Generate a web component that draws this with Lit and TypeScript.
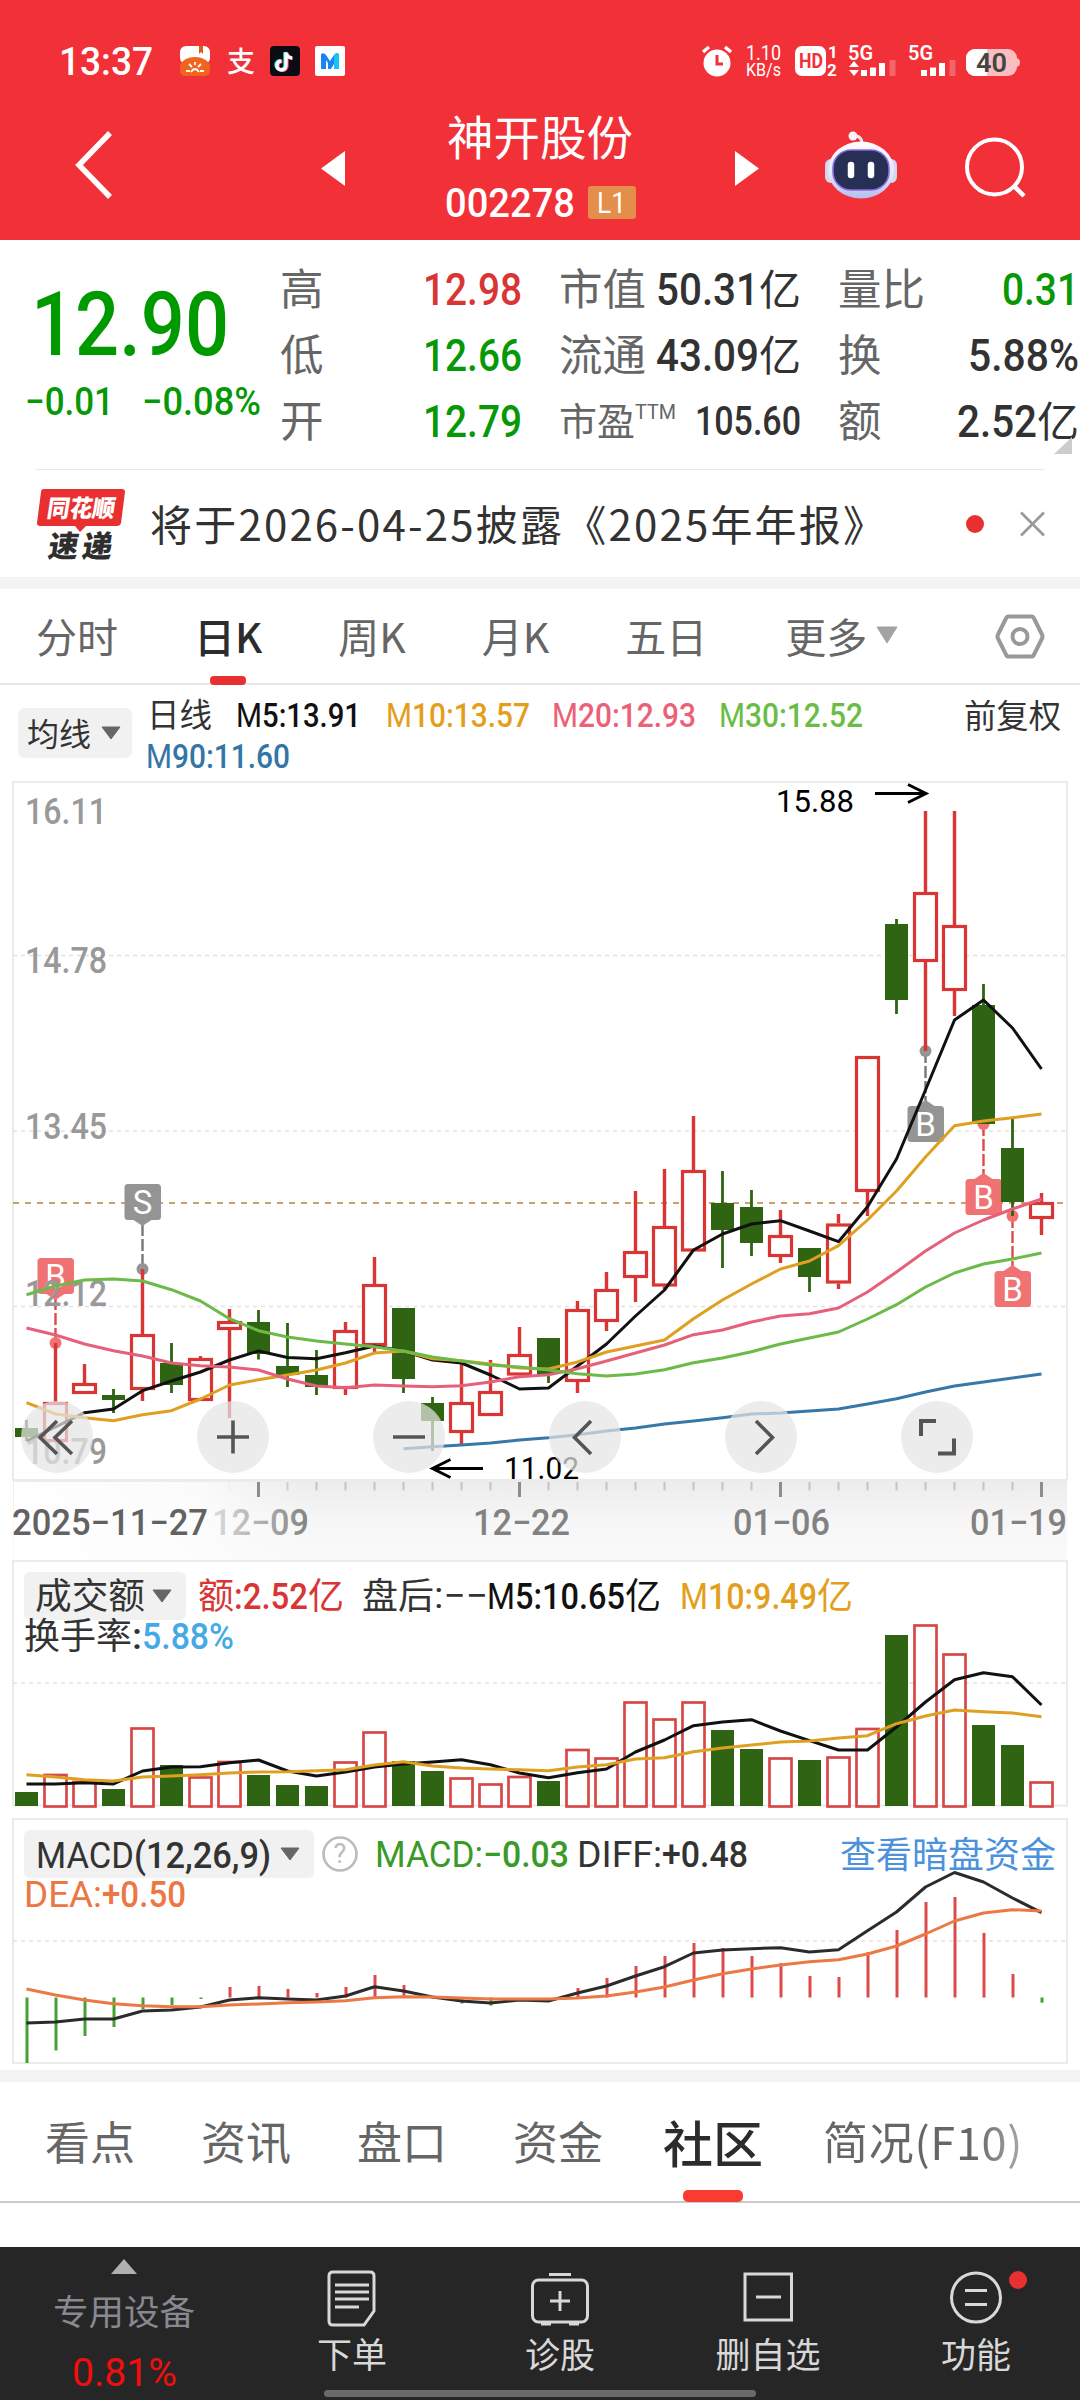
import { LitElement, html, svg, css } from "lit";
import { customElement } from "lit/decorators.js";

const RED = "#d93535";
const GREEN = "#2f6412";
const NUM = 'Roboto, "Noto Sans CJK SC", sans-serif';
const CJK = '"Noto Sans CJK SC", sans-serif';

const X0 = 26.5;
const STEP = 29;
const px = (i: number) => X0 + i * STEP;

// [rising, high, body top, body bottom, low] in chart units
const CANDLES: [number, number, number, number, number][] = [
  [0, 1420, 1428, 1437, 1441], [1, 1343, 1402, 1442, 1442], [1, 1364, 1383, 1394, 1394],
  [0, 1389, 1395, 1400, 1413], [1, 1269, 1334, 1390, 1401], [0, 1343, 1363, 1385, 1393],
  [1, 1356, 1358, 1401, 1401], [1, 1309, 1321, 1330, 1418], [0, 1310, 1322, 1354, 1359.5],
  [0, 1323, 1366, 1375, 1387], [0, 1350, 1375, 1387, 1395], [1, 1322, 1330, 1389, 1395],
  [1, 1257, 1284, 1346, 1352], [0, 1308, 1308, 1379, 1393], [0, 1397, 1403, 1421, 1451],
  [1, 1364, 1402, 1433, 1445], [1, 1360, 1391, 1416, 1416], [1, 1327, 1354, 1375.5, 1375.5],
  [0, 1338, 1338, 1374, 1383], [1, 1301, 1309, 1382, 1393], [1, 1272, 1289, 1322, 1331],
  [1, 1191, 1251, 1278, 1302], [1, 1169, 1226, 1286.5, 1289], [1, 1116, 1170, 1251.5, 1251.5],
  [0, 1171, 1203, 1230, 1268], [0, 1190, 1207, 1243, 1256], [1, 1210, 1235, 1257, 1263],
  [0, 1248, 1248, 1277, 1292], [1, 1214, 1223.5, 1283.5, 1289], [1, 1056, 1056, 1192, 1216],
  [0, 919, 924, 1000, 1014], [1, 811, 892, 962, 1051], [1, 811, 925, 991, 1016],
  [0, 984, 1005, 1124, 1124], [0, 1119, 1148, 1202, 1216], [1, 1193, 1202, 1219, 1235],
];
const M5 = [1441, 1427, 1412.7, 1409, 1390.7, 1381, 1372, 1360, 1351, 1357.5, 1358.7, 1352.7, 1346, 1351, 1360, 1363, 1375, 1389, 1388, 1366, 1344, 1316, 1290, 1250, 1234, 1224, 1220.7, 1231, 1241.7, 1206.7, 1159, 1090, 1020, 1000, 1028, 1069];
const M10 = [1402.7, 1414, 1417.7, 1420.7, 1414.7, 1410.7, 1399, 1385, 1379.7, 1375, 1370, 1363, 1353, 1351, 1358.7, 1360.7, 1364, 1368, 1369, 1362, 1352, 1346, 1340, 1318.7, 1300, 1284, 1269, 1261, 1245.7, 1220, 1191, 1157, 1125.7, 1121, 1117.7, 1114];
const M20 = [1328, 1335, 1344, 1350.7, 1356, 1363, 1365.7, 1367, 1370, 1379, 1386, 1387.7, 1385, 1386, 1386.7, 1385.7, 1382, 1376.7, 1374.7, 1368.7, 1361, 1353, 1345, 1334.7, 1330, 1322, 1316, 1313.7, 1308, 1292, 1272, 1251, 1233, 1220, 1209, 1199];
const M30 = [1294.7, 1286, 1280, 1279, 1281, 1289.7, 1301, 1318.7, 1330.7, 1337, 1341, 1344, 1346.7, 1351, 1357, 1361, 1365, 1367, 1370, 1373.7, 1376, 1374, 1369.7, 1362.7, 1358, 1351.7, 1344, 1338, 1332, 1319, 1304.7, 1287, 1273, 1264, 1259, 1253];
const M90 = [1448.7, 1446.7, 1445, 1443, 1440, 1437.7, 1434.7, 1431, 1428, 1424, 1421, 1417.7, 1414, 1413, 1411, 1409, 1404, 1398.7, 1392, 1386, 1382, 1378, 1374];

const VOLUME = [1792, 1774, 1781, 1789, 1727.5, 1765, 1776.5, 1761, 1775, 1785, 1786, 1761.5, 1731.5, 1761, 1771, 1777.5, 1783.5, 1776, 1781, 1749, 1757.5, 1701.5, 1718.5, 1701.5, 1730, 1749, 1757.5, 1760, 1756.5, 1728, 1635, 1624.5, 1653.5, 1725, 1745, 1781.5];
const V5 = [1784, 1784, 1782.7, 1784, 1771, 1767, 1766.7, 1762.7, 1760, 1771, 1776, 1772, 1767, 1764, 1762, 1759.7, 1764.7, 1773, 1777.7, 1772.7, 1769, 1752, 1740, 1725.7, 1722, 1719.7, 1731, 1740.7, 1750, 1750, 1727, 1702, 1679.7, 1672.7, 1676.7, 1705];
const V10 = [1774.7, 1777, 1779.7, 1781, 1777, 1776, 1774.7, 1773, 1772, 1771.7, 1770.7, 1769.7, 1765, 1761.7, 1766, 1768, 1769, 1769.7, 1770.7, 1767, 1764.7, 1759, 1757.7, 1751.7, 1748, 1745, 1742, 1741, 1738, 1735.7, 1723.7, 1716, 1710, 1711.7, 1713, 1716.7];

const ZERO = 1997.5;
const HIST = [2063, 2050.5, 2036, 2027, 2009, 2005, 1999, 1987, 1986, 1989, 1993, 1987, 1975, 1985, 1997.5, 2003.5, 2005.5, 1997.5, 1997.5, 1988, 1978, 1966, 1956, 1943, 1948, 1956, 1963, 1976, 1977, 1952, 1930, 1902, 1897, 1933, 1974, 2002.7];
const DIFF = [2023, 2022, 2019, 2019, 2011, 2010, 2007, 2000, 1997.7, 1999, 2000, 1996, 1986.7, 1991, 1997, 2001, 2003, 2000, 2001, 1993, 1986, 1976, 1966.7, 1953, 1950, 1948.7, 1947.7, 1952, 1949.7, 1930.7, 1912, 1887, 1872.5, 1882, 1898, 1912.7];
const DEA = [1989, 1995, 2000, 2003.7, 2005.7, 2006.7, 2006.7, 2005, 2004, 2002.7, 2002, 2000.7, 1997.7, 1996.7, 1997, 1998, 1999, 1999, 1999, 1998, 1996, 1992, 1987, 1980, 1973.7, 1969, 1965, 1961.7, 1959.7, 1954, 1946, 1934, 1921, 1913, 1909.7, 1911];

/** Text squeezed to an exact width, boxed to its cap height. */
const fit = (text: string, w: number, size: number, color: string, weight = 500) => html`
  <svg class="fit" width=${w} height=${Math.round(size * 0.71)}>
    <text x="0" y=${Math.round(size * 0.71)} font-family=${NUM} font-size=${size} font-weight=${weight}
      fill=${color} textLength=${w} lengthAdjust="spacingAndGlyphs">${text}</text>
  </svg>`;

/** Same, placed inside a chart. */
const label = (x: number, y: number, text: string, w: number, size: number, color: string, weight = 500, family = NUM) => svg`
  <text x=${x} y=${y} font-family=${family} font-size=${size} font-weight=${weight} fill=${color}
    textLength=${w} lengthAdjust="spacingAndGlyphs">${text}</text>`;

const line = (ys: number[], color: string, start = 0, w = 3) => svg`
  <polyline fill="none" stroke=${color} stroke-width=${w} stroke-linejoin="round"
    points=${ys.map((y, i) => `${px(i + start)},${y}`).join(" ")} />`;

const dash = (y: number) => svg`
  <line x1="13" x2="1066" y1=${y} y2=${y} stroke="#e2e2e2" stroke-width="1.6" stroke-dasharray="4 4" />`;

const marker = (i: number, letter: string, dotY: number, top: number, down: boolean, fill: string, stem: string) => {
  const x = px(i);
  return svg`
    <line x1=${x} x2=${x} y1=${down ? top + 40 : dotY} y2=${down ? dotY : top - 5} stroke=${stem} stroke-width="2.4" stroke-dasharray="12 3" />
    <circle cx=${x} cy=${dotY} r="6" fill=${fill} />
    <path d=${down ? `M${x - 9} ${top + 36}h18l-9 6z` : `M${x - 9} ${top}h18l-9 -6z`} fill=${fill} />
    <rect x=${x - 18} y=${top} width="36.5" height="36" rx="3.5" fill=${fill} />
    <text x=${x} y=${top + 30} text-anchor="middle" font-family=${NUM} font-size="33" fill="#fff">${letter}</text>`;
};

const caret = (x: number, y: number, color = "#666") => svg`<path d="M${x} ${y}h18l-9 12z" fill=${color} stroke=${color} stroke-width="1" stroke-linejoin="round" />`;

@customElement("top-bar")
class TopBar extends LitElement {
  static styles = css`
    :host { display: block; height: 240px; background: #f23038; color: #fff; }
    .status { display: flex; align-items: center; justify-content: space-between; padding: 41px 60px 0 59px; height: 40px; }
    .nav { display: flex; align-items: center; height: 159px; padding-top: 0; }
    .fit, svg { display: block; overflow: visible; flex: none; }
    .left { display: flex; align-items: center; gap: 27px; }
    .title { width: 390px; display: flex; flex-direction: column; align-items: center; gap: 24px; padding-top: 5px; }
    .name { font: 400 46.5px/54px "Noto Sans CJK SC", sans-serif; height: 54px; }
    .code { display: flex; align-items: center; gap: 13px; }
    .level { display: flex; align-items: center; justify-content: center; width: 48px; height: 33px; border-radius: 3px; background: #e38e4a; }
  `;
  render() {
    return html`
      <div class="status">
        <div class="left">
          ${fit("13:37", 94, 39, "#fff", 500)}
          <svg width="165" height="30" viewBox="180 45 165 30">
            <rect x="180" y="45" width="30" height="18" rx="6" fill="#fff" />
            <path d="M199 45h4v8l-2-2-2 2z" fill="#e05a20" />
            <path d="M180 66a15 10 0 0 1 30 0v4a5 5 0 0 1-5 5h-20a5 5 0 0 1-5-5z" fill="#f0641e" />
            <path d="M186 70h4M200 70h4M189 63l3 3M201 63l-3 3M195 61v3M191 71q4-6 8 0" stroke="#fff" stroke-width="1.8" fill="none" />
            <text x="227" y="71" font-family=${CJK} font-size="28" font-weight="500" fill="#fff">支</text>
            <rect x="270" y="45" width="30" height="30" rx="4" fill="#0b0b14" />
            <g fill="none" stroke-width="3.4">
              <path d="M285 51v13a4.500 4.500 0 1 1-4.500-4.500M285 51q1 5 6 5.500" stroke="#27e8e0" />
              <path d="M287 52v13a4.500 4.500 0 1 1-4.500-4.500M287 52q1 5 6 5.500" stroke="#f23b5c" />
              <path d="M286 51.500v13a4.500 4.500 0 1 1-4.500-4.500M286 51.500q1 5 6 5.500" stroke="#fff" />
            </g>
            <rect x="315" y="45" width="30" height="30" rx="2" fill="#fff" />
            <path d="M321 68V53q3-2 5 1l4 6 4-6q2-3 5-1v15h-5v-5l-3 5h-3v-6l-2-3v9z" fill="#1b84f2" />
            <path d="M334 54q2-3 5-1v15h-5z" fill="#19c3f5" />
          </svg>
        </div>
        <svg width="318" height="30" viewBox="702 45 318 30">
          <circle cx="717" cy="62" r="13.500" fill="#fff" />
          <path d="M703 51l6-5M731 51l-6-5" stroke="#fff" stroke-width="3.500" />
          <path d="M717 54v9h6" stroke="#f23038" stroke-width="3" fill="none" />
          ${label(746, 59, "1.10", 35, 20, "#fff", 400)}
          ${label(746, 75, "KB/s", 35, 18, "#fff", 400)}
          <rect x="795" y="45" width="31" height="30" rx="7" fill="#fff" />
          ${label(799, 67, "HD", 24, 20, "#f23038", 700)}
          <text x="828" y="57" font-family=${NUM} font-size="17" font-weight="700" fill="#fff">1</text>
          <text x="827" y="75" font-family=${NUM} font-size="17" font-weight="700" fill="#fff">2</text>
          ${label(848, 59, "5G", 25, 20, "#fff", 600)}
          <path d="M849 66l5-6 5 6zM849 69h10l-5 6z" fill="#fff" />
          <path d="M864 69v6M873 66.500v8.500M882 62v13" stroke="#fff" stroke-width="6" />
          <path d="M892.500 59v16" stroke="#fff" stroke-opacity=".25" stroke-width="6" />
          ${label(908, 59, "5G", 25, 20, "#fff", 600)}
          <path d="M924 69v6M933 66.500v8.500M942 62v13" stroke="#fff" stroke-width="6" />
          <path d="M952.500 59v16" stroke="#fff" stroke-opacity=".25" stroke-width="6" />
          <rect x="966" y="48" width="51" height="27" rx="9" fill="#fbbec0" />
          <path d="M975 48h12v27h-12a9 9 0 0 1-9-9v-9a9 9 0 0 1 9-9z" fill="#fff" />
          <path d="M1017 57q3 1 3 4.500t-3 4.500z" fill="#fbbec0" />
          ${label(976, 71, "40", 31, 26, "#444", 600)}
        </svg>
      </div>
      <div class="nav">
        <svg width="345" height="80" viewBox="0 121 345 80">
          <path d="M110 133L79 165l31 32" fill="none" stroke="#fff" stroke-width="5.500" />
          <path d="M345 151v35l-24-17.500z" fill="#fff" />
        </svg>
        <div class="title">
          <div class="name">神开股份</div>
          <div class="code">
            ${fit("002278", 130, 41, "#fff", 500)}
            <div class="level">${fit("L1", 29, 29, "#fff", 400)}</div>
          </div>
        </div>
        <svg width="345" height="80" viewBox="735 121 345 80">
          <defs>
            <linearGradient id="shell" x1="0" y1="0" x2="0" y2="1">
              <stop offset="0" stop-color="#fdfcff" /><stop offset=".6" stop-color="#e2e4f6" /><stop offset="1" stop-color="#b3bff0" />
            </linearGradient>
          </defs>
          <path d="M735 151v35l24-17.500z" fill="#fff" />
          <path d="M862 144q0-8-7-8" fill="none" stroke="#eee6f4" stroke-width="3" />
          <circle cx="853" cy="136" r="4.500" fill="#f8f2fa" />
          <rect x="825" y="159" width="12" height="24" rx="6" fill="#d5d7f2" />
          <rect x="885" y="159" width="12" height="24" rx="6" fill="#d5d7f2" />
          <ellipse cx="861" cy="170" rx="33" ry="28.500" fill="url(#shell)" />
          <rect x="833" y="150" width="56" height="40" rx="18" fill="#272f55" stroke="#8a6be0" stroke-width="1.600" />
          <path d="M851 165v10M871 165v10" stroke="#fff" stroke-width="6.500" stroke-linecap="round" />
          <circle cx="994.500" cy="167" r="27.500" fill="none" stroke="#fff" stroke-width="4" />
          <path d="M1014 186l10 10" stroke="#fff" stroke-width="4.500" />
        </svg>
      </div>`;
  }
}

@customElement("quote-panel")
class QuotePanel extends LitElement {
  static styles = css`
    :host { display: block; background: #fff; }
    svg { display: block; overflow: visible; flex: none; }
    .quote { position: relative; display: flex; height: 229px; }
    .price { width: 280px; display: flex; flex-direction: column; padding-top: 52px; box-sizing: border-box; }
    .last { padding-left: 31px; }
    .change { display: flex; gap: 28px; padding: 32px 0 0 25px; }
    .stats { display: flex; gap: 37px; padding-top: 16px; }
    .col { width: 242px; }
    .col:last-child { width: 241px; }
    .row { height: 66px; display: flex; align-items: center; justify-content: space-between; }
    .key { font: 400 43.5px/1 "Noto Sans CJK SC", sans-serif; color: #666; padding-bottom: 5px; white-space: nowrap; }
    .small { font-size: 38px; display: flex; align-items: flex-start; }
    .small svg { margin-top: 4px; }
    .val { display: flex; align-items: center; }
    .unit { font: 400 42px/1 "Noto Sans CJK SC", sans-serif; color: #323232; padding-bottom: 5px; }
    .corner { position: absolute; left: 1054px; top: 197px; }
    .notice { display: flex; align-items: center; height: 107px; margin: 0 36px; border-top: 1px solid #e9e9e9; }
    .headline { margin-left: 24px; flex: 1; }
    .band { height: 12px; background: #f4f4f4; }
  `;
  render() {
    const G = "#069806", K = "#323232";
    return html`
      <div class="quote">
        <div class="price">
          <div class="last">${fit("12.90", 198, 89, "#009a00", 500)}</div>
          <div class="change">${fit("−0.01", 89, 39, G, 500)}${fit("−0.08%", 119, 39, G, 500)}</div>
        </div>
        <div class="stats">
          <div class="col">
            <div class="row"><span class="key">高</span>${fit("12.98", 99, 45, RED)}</div>
            <div class="row"><span class="key">低</span>${fit("12.66", 99, 45, G)}</div>
            <div class="row"><span class="key">开</span>${fit("12.79", 99, 45, G)}</div>
          </div>
          <div class="col">
            <div class="row"><span class="key">市值</span><span class="val">${fit("50.31", 103, 45, K)}<span class="unit">亿</span></span></div>
            <div class="row"><span class="key">流通</span><span class="val">${fit("43.09", 103, 45, K)}<span class="unit">亿</span></span></div>
            <div class="row"><span class="key small">市盈${fit("TTM", 41, 21, "#666", 400)}</span>${fit("105.60", 106, 40, K)}</div>
          </div>
          <div class="col">
            <div class="row"><span class="key">量比</span>${fit("0.31", 77, 45, G)}</div>
            <div class="row"><span class="key">换</span>${fit("5.88%", 111, 45, K)}</div>
            <div class="row"><span class="key">额</span><span class="val">${fit("2.52", 80, 45, K)}<span class="unit">亿</span></span></div>
          </div>
        </div>
        <svg class="corner" width="18" height="17"><path d="M18 0v17H0z" fill="#ccc" /></svg>
      </div>
      <div class="notice">
        <svg width="90" height="72" viewBox="36 486 90 72">
          <path d="M44 487h78q3 0 3 3l-4 31q-1 3-4 3H86l-6 6-5-6H40q-3 0-3-3l4-31q0-3 3-3z" fill="#e93030" />
          <g transform="translate(46 515) skewX(-9)">
            <text x="0" y="0" font-family=${CJK} font-size="24" font-weight="900" fill="#fff" textLength="68" lengthAdjust="spacingAndGlyphs">同花顺</text>
          </g>
          <g transform="translate(47 555) skewX(-9)">
            <text x="0" y="0" font-family=${CJK} font-size="30" font-weight="900" fill="#2e2e2e" textLength="64">速递</text>
          </g>
        </svg>
        <svg class="headline" height="40" width="760">
          <text x="0" y="37" font-family=${CJK} font-size="42" fill=${K} textLength="735" lengthAdjust="spacing">将于2026-04-25披露《2025年年报》</text>
        </svg>
        <svg width="80" height="30" viewBox="964 508 80 30">
          <circle cx="975" cy="523" r="9" fill="#e93030" />
          <path d="M1021 511.500l23 23M1044 511.500l-23 23" stroke="#999" stroke-width="2.600" />
        </svg>
      </div>
      <div class="band"></div>`;
  }
}

@customElement("period-tabs")
class PeriodTabs extends LitElement {
  static styles = css`
    :host { display: block; background: #fff; }
    svg { display: block; overflow: visible; flex: none; }
    .tabs { display: flex; gap: 76px; height: 96px; padding: 0 36px 0 36px; border-bottom: 2px solid #e8e8e8; box-sizing: border-box; font: 400 41px/92px "Noto Sans CJK SC", sans-serif; color: #666; }
    .tab { display: flex; flex-direction: column; align-items: center; height: 96px; flex: none; }
    .active { color: #2c2c2c; font-weight: 500; }
    .text { height: 87px; }
    .bar { width: 36px; height: 9px; border-radius: 4px; background: #e93030; }
    .more { flex-direction: row; gap: 9px; align-items: center; height: 92px; margin-left: 2px; }
    .gear { margin-top: 25px; margin-left: auto; }
    .legend { height: 95px; }
  `;
  render() {
    return html`
      <div class="tabs">
        <div class="tab">分时</div>
        <div class="tab active"><div class="text">日K</div><div class="bar"></div></div>
        <div class="tab">周K</div>
        <div class="tab">月K</div>
        <div class="tab">五日</div>
        <div class="tab more">更多<svg width="22" height="18"><path d="M1 1h20l-10 16z" fill="#a3a3a3" stroke="#a3a3a3" stroke-linejoin="round" /></svg></div>
        <svg class="gear" width="48" height="46" viewBox="996 614 48 46">
          <path d="M1009 616.500h22a3 3 0 0 1 3 2l8 16q1 2 0 4l-8 16a3 3 0 0 1-3 2h-22a3 3 0 0 1-3-2l-8-16q-1-2 0-4l8-16a3 3 0 0 1 3-2z" fill="none" stroke="#999" stroke-width="4" />
          <circle cx="1020" cy="636.500" r="7.500" fill="none" stroke="#999" stroke-width="4" />
        </svg>
      </div>
      <svg class="legend" width="1080" height="95" viewBox="0 685 1080 95">
        <rect x="18" y="708" width="114" height="50" rx="7" fill="#f1f1f1" />
        ${label(27, 746, "均线", 64, 32, "#333", 400, CJK)}
        ${caret(102, 727)}
        ${label(147, 727, "日线", 65, 32.5, "#333", 400, CJK)}
        ${label(236, 727, "M", 26, 33, "#111", 400)}
        ${label(262, 727, "5:13.91", 99, 33, "#111")}
        ${label(386, 727, "M", 26, 33, "#e39f1c", 400)}
        ${label(412, 727, "10:13.57", 118, 33, "#e39f1c")}
        ${label(552, 727, "M", 26, 33, "#ec6078", 400)}
        ${label(578, 727, "20:12.93", 118, 33, "#ec6078")}
        ${label(719, 727, "M", 26, 33, "#69bd45", 400)}
        ${label(745, 727, "30:12.52", 118, 33, "#69bd45")}
        ${label(964, 728, "前复权", 97, 32.5, "#333", 400, CJK)}
        ${label(146, 768, "M", 26, 33, "#3276a6", 400)}
        ${label(172, 768, "90:11.60", 118, 33, "#3276a6")}
      </svg>`;
  }
}

@customElement("price-chart")
class PriceChart extends LitElement {
  static styles = css`:host { display: block; } svg { display: block; }`;
  render() {
    const gridLabels: [number, string][] = [[824, "16.11"], [973, "14.78"], [1139, "13.45"], [1306, "12.12"], [1464, "10.79"]];
    const dates: [number, string][] = [[212, "12−09"], [473, "12−22"], [733, "01−06"], [970, "01−19"]];
    const pads = [57, 233, 409, 585, 761, 937];
    return html`
      <svg width="1080" height="780" viewBox="0 780 1080 780">
        <defs>
          <linearGradient id="axis" x1="0" y1="0" x2="0" y2="1">
            <stop offset="0" stop-color="#ececec" /><stop offset=".55" stop-color="#f7f7f7" /><stop offset="1" stop-color="#fafafa" />
          </linearGradient>
          <linearGradient id="veil" gradientUnits="userSpaceOnUse" x1="13" y1="0" x2="310" y2="0">
            <stop offset="0" stop-color="#fff" /><stop offset=".62" stop-color="#fdfdfd" stop-opacity=".85" /><stop offset="1" stop-color="#fafafa" stop-opacity="0" />
          </linearGradient>
        </defs>
        <rect x="0" y="780" width="1080" height="780" fill="#fff" />
        <rect x="13" y="1481" width="1054" height="79" fill="url(#axis)" />
        <rect x="13" y="782" width="1054" height="698" fill="#fff" stroke="#ebebeb" stroke-width="2" />
        ${[955.5, 1131, 1306.5].map(dash)}
        <line x1="13" x2="1066" y1="1203" y2="1203" stroke="#c9a16a" stroke-width="1.800" stroke-dasharray="6 6" />
        ${marker(1, "B", 1343, 1258, true, "#f07272", "#dd4a4a")}
        ${marker(4, "S", 1269, 1184, true, "#949494", "#777")}
        ${marker(31, "B", 1051, 1106, false, "#949494", "#777")}
        ${marker(33, "B", 1124, 1179, false, "#f07272", "#dd4a4a")}
        ${marker(34, "B", 1216, 1271, false, "#f07272", "#dd4a4a")}
        ${gridLabels.map(([y, t]) => label(25, y, t, 82, 36, "#999"))}
        ${CANDLES.map(([up, hi, top, bot, lo], i) => svg`
          <path d="M${px(i)} ${hi}V${top}M${px(i)} ${bot}V${lo}" stroke=${up ? RED : GREEN} stroke-width=${up ? 3.4 : 2.8} />
          ${up
            ? svg`<rect x=${px(i) - 11} y=${top + 1.5} width="22" height=${Math.max(bot - top - 3, 2)} fill="#fff" stroke=${RED} stroke-width="3.2" />`
            : svg`<rect x=${px(i) - 11.5} y=${top} width="23" height=${bot - top} fill=${GREEN} />`}`)}
        ${line(M90, "#3878a8", 13)}
        ${line(M5, "#111")}
        ${line(M10, "#df9f20")}
        ${line(M20, "#e6607a")}
        ${line(M30, "#6cba48")}
        ${label(776, 812, "15.88", 78, 32, "#000", 400)}
        <path d="M875 793.500h50M908 784.500l18 9-18 9" fill="none" stroke="#000" stroke-width="3" />
        ${label(504, 1479, "11.02", 75, 32, "#000", 400)}
        <path d="M483 1468.500h-50M450.500 1459.500l-18 9 18 9" fill="none" stroke="#000" stroke-width="3" />
        ${pads.map((x) => svg`<circle cx=${x} cy="1437" r="36" fill="#e4e4e4" fill-opacity=".72" />`)}
        <g fill="none" stroke="#555" stroke-width="3.600">
          <path d="M57 1421l-17 16.500 17 16.500M72 1421l-17 16.500 17 16.500" />
          <path d="M217 1437h32M233 1420.500v33M393 1437h32" />
          <path d="M591 1421l-16.500 16.500 16.500 16.500M756 1421l16.500 16.500-16.500 16.500" />
          <path d="M921 1436v-15h15M938 1453.500h16v-15" stroke-width="4" />
        </g>
        ${CANDLES.map((_, i) => i < 7 ? "" : (i - 8) % 9 === 0
          ? svg`<path d="M${px(i)} 1482v15" stroke="#8c8c8c" stroke-width="3" />`
          : svg`<path d="M${px(i)} 1482v8.500" stroke=${i === 7 ? "#ddd" : "#c4c4c4"} stroke-width="2" />`)}
        ${dates.map(([x, t]) => label(x, 1535, t, 97, 36, "#828282"))}
        <rect x="14" y="1482" width="296" height="78" fill="url(#veil)" />
        <path d="M${px(8)} 1482v15" stroke="#8c8c8c" stroke-width="3" />
        ${label(12, 1535, "2025−11−27", 196, 36, "#626262")}
      </svg>`;
  }
}

@customElement("volume-chart")
class VolumeChart extends LitElement {
  static styles = css`:host { display: block; } svg { display: block; }`;
  render() {
    return html`
      <svg width="1080" height="258" viewBox="0 1560 1080 258">
        <rect x="0" y="1560" width="1080" height="258" fill="#fff" />
        <rect x="13" y="1561" width="1054" height="244.500" fill="none" stroke="#ebebeb" stroke-width="2" />
        ${dash(1683)}
        <rect x="24" y="1572" width="162" height="48" rx="6" fill="#f1f1f1" />
        ${label(35, 1608.5, "成交额", 110, 36, "#333", 400, CJK)}
        ${caret(153, 1590)}
        ${label(198, 1608.5, "额", 36, 36, RED, 400, CJK)}
        ${label(234, 1609, ":2.52", 74, 36, RED)}
        ${label(308, 1608.5, "亿", 36, 36, RED, 400, CJK)}
        ${label(362, 1608.5, "盘后", 72, 36, "#333", 400, CJK)}
        ${label(434, 1608, ":−−", 54, 36, "#333", 400)}
        ${label(487, 1609, "M", 28, 36, "#111", 400)}
        ${label(515, 1609, "5:10.65", 110, 36, "#111")}
        ${label(625, 1608.5, "亿", 36, 36, "#111", 400, CJK)}
        ${label(680, 1609, "M", 28, 36, "#e39f1c", 400)}
        ${label(708, 1609, "10:9.49", 109, 36, "#e39f1c")}
        ${label(817, 1608.5, "亿", 36, 36, "#e39f1c", 400, CJK)}
        ${label(24, 1648.5, "换手率", 108, 36, "#333", 400, CJK)}
        ${label(132, 1649, ":", 10, 36, "#333")}
        ${label(142, 1649, "5.88%", 92, 36, "#45a9e6")}
        ${VOLUME.map((y, i) => CANDLES[i][0]
          ? svg`<rect x=${px(i) - 11} y=${y + 1} width="22" height=${1805.5 - y} fill="#fff" stroke="#d64848" stroke-width="2.700" />`
          : svg`<rect x=${px(i) - 11.5} y=${y} width="23" height=${1806 - y} fill=${GREEN} />`)}
        ${line(V5, "#111")}
        ${line(V10, "#df9f20")}
      </svg>`;
  }
}

@customElement("macd-chart")
class MacdChart extends LitElement {
  static styles = css`:host { display: block; } svg { display: block; } .band { height: 12px; background: #f4f4f4; }`;
  render() {
    return html`
      <svg width="1080" height="252" viewBox="0 1818 1080 252">
        <rect x="0" y="1818" width="1080" height="252" fill="#fff" />
        <rect x="13" y="1819" width="1054" height="244" fill="none" stroke="#ebebeb" stroke-width="2" />
        ${dash(1941)}
        <rect x="24" y="1830" width="290" height="48" rx="6" fill="#f1f1f1" />
        ${label(36, 1868, "MACD", 98, 36, "#333", 400)}
        ${label(134, 1868, "(12,26,9)", 137, 36, "#333")}
        ${caret(281, 1848)}
        <circle cx="340" cy="1854" r="16.500" fill="none" stroke="#bbb" stroke-width="2.600" />
        <text x="340" y="1863" text-anchor="middle" font-family=${NUM} font-size="27" fill="#bbb">?</text>
        ${label(375, 1867, "MACD:", 108, 36, "#3a9a28", 400)}
        ${label(483, 1867, "−0.03", 86, 36, "#3a9a28")}
        ${label(577, 1867, "DIFF:", 85, 36, "#333", 400)}
        ${label(662, 1867, "+0.48", 86, 36, "#333")}
        ${label(840, 1868, "查看暗盘资金", 216, 36, "#4c91dc", 400, CJK)}
        ${label(24, 1907, "DEA:", 78, 36, "#ec7644", 400)}
        ${label(102, 1907, "+0.50", 84, 36, "#ec7644")}
        ${HIST.map((y, i) => svg`<path d="M${px(i) + 0.5} ${ZERO}V${y}" stroke=${y > ZERO ? "#45a035" : "#dc4a4a"} stroke-width="3" />`)}
        ${line(DIFF, "#2b2b2b")}
        ${line(DEA, "#ec7846")}
      </svg>
      <div class="band"></div>`;
  }
}

@customElement("content-tabs")
class ContentTabs extends LitElement {
  static styles = css`
    :host { display: block; background: #fff; height: 165px; }
    .tabs { display: flex; align-items: flex-start; gap: 66px; height: 121px; box-sizing: border-box; padding: 0 0 0 45px; border-bottom: 2px solid #cacaca; font: 400 45px/118px "Noto Sans CJK SC", sans-serif; color: #666; }
    .tab { height: 119px; flex: none; }
    .active { flex: none; color: #2c2c2c; font-weight: 500; font-size: 50px; display: flex; flex-direction: column; align-items: center; height: 121px; margin: 0 -6px 0 -6px; }
    .text { height: 108px; }
    .bar { width: 60px; height: 12px; border-radius: 5px; background: #fb3b31; }
    .fade { letter-spacing: .7px; background: linear-gradient(90deg, #666 75%, #aaa); -webkit-background-clip: text; background-clip: text; color: transparent; }
  `;
  render() {
    return html`
      <div class="tabs">
        ${["看点", "资讯", "盘口", "资金"].map((t) => html`<div class="tab">${t}</div>`)}
        <div class="active"><div class="text">社区</div><div class="bar"></div></div>
        <div class="tab fade">简况(F10)</div>
      </div>`;
  }
}

@customElement("bottom-bar")
class BottomBar extends LitElement {
  static styles = css`
    :host { display: block; position: relative; height: 153px; background: #262626; color: #d8d8d8; }
    svg { display: block; overflow: visible; }
    .items { display: flex; height: 153px; }
    .sector { width: 248px; display: flex; flex-direction: column; align-items: center; padding-top: 12px; box-sizing: border-box; font: 400 35.500px/42px "Noto Sans CJK SC", sans-serif; color: #888890; }
    .name { margin: 15px 0 28px; }
    .item { width: 208px; display: flex; flex-direction: column; align-items: center; padding-top: 22px; box-sizing: border-box; font: 400 35px/42px "Noto Sans CJK SC", sans-serif; }
    .item svg { margin-bottom: 5px; }
    .home { position: absolute; left: 324px; bottom: 3px; width: 432px; height: 7px; border-radius: 4px; background: #6a6a6a; }
  `;
  render() {
    const icons = [
      svg`<path d="M11 3h37q4 0 4 4v35l-10 14H11q-4 0-4-4V7q0-4 4-4z" /><path d="M13 16h34M13 23h34M13 30h34M13 38h24" stroke-width="2.800" />`,
      svg`<rect x="2.500" y="11" width="55" height="42" rx="6" /><path d="M19 5.500h22M30 22v20M20 32h20M11 55h10M39 55h10" />`,
      svg`<rect x="7" y="5" width="46.500" height="46" /><path d="M18 28h25" />`,
      svg`<circle cx="30" cy="28.500" r="24.500" /><path d="M19 21.500h22M19 35.500h22" /><circle cx="72" cy="11" r="9" fill="#e93030" stroke="none" />`,
    ];
    const names = ["下单", "诊股", "删自选", "功能"];
    return html`
      <div class="items">
        <div class="sector">
          <svg width="26" height="15"><path d="M13 0l13 15H0z" fill="#b0b0b0" /></svg>
          <div class="name">专用设备</div>
          ${fit("0.81%", 105, 38, "#f00f0c", 400)}
        </div>
        ${names.map((n, i) => html`
          <div class="item">
            <svg width="60" height="58" fill="none" stroke="#d8d8d8" stroke-width="3">${icons[i]}</svg>
            ${n}
          </div>`)}
      </div>
      <div class="home"></div>`;
  }
}

@customElement("app-root")
class AppRoot extends LitElement {
  static styles = css`:host { display: block; width: 1080px; height: 2400px; background: #fff; overflow: hidden; }`;
  render() {
    return html`
      <top-bar></top-bar>
      <quote-panel></quote-panel>
      <period-tabs></period-tabs>
      <price-chart></price-chart>
      <volume-chart></volume-chart>
      <macd-chart></macd-chart>
      <content-tabs></content-tabs>
      <bottom-bar></bottom-bar>`;
  }
}
